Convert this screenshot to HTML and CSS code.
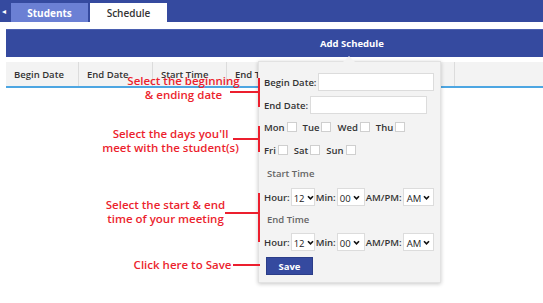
FILE: index.html
```html
<!DOCTYPE html>
<html>
<head>
<meta charset="utf-8">
<link rel="stylesheet" href="styles.css">
</head>
<body>
<div class="page">
  <div class="topbar">
    <span class="back">&#9666;</span>
    <div class="tab tab-students">Students</div>
    <div class="tab tab-schedule">Schedule</div>
  </div>
  <div class="content">
    <div class="addbar">Add Schedule</div>
    <div class="thead">
      <div class="th c1">Begin Date</div>
      <div class="th c2">End Date</div>
      <div class="th c3">Start Time</div>
      <div class="th c4">End Time</div>
      <div class="th c5"></div>
    </div>
  </div>

  <div class="popover">
    <div class="arrow"></div>
    <div class="row r-begin"><label>Begin Date:</label><span class="input w-begin"></span></div>
    <div class="row r-end"><label>End Date:</label><span class="input w-end"></span></div>
    <div class="row days d1">
      <label>Mon</label><span class="cb"></span>
      <label>Tue</label><span class="cb"></span>
      <label>Wed</label><span class="cb"></span>
      <label>Thu</label><span class="cb"></span>
    </div>
    <div class="row days d2">
      <label>Fri</label><span class="cb"></span>
      <label>Sat</label><span class="cb"></span>
      <label>Sun</label><span class="cb"></span>
    </div>
    <div class="sub sub1">Start Time</div>
    <div class="row time t1">
      <label>Hour:</label><span class="sel s-h">12<svg viewBox="0 0 8 6"><path d="M1 1.5 4 4.5 7 1.5"/></svg></span>
      <label>Min:</label><span class="sel s-m">00<svg viewBox="0 0 8 6"><path d="M1 1.5 4 4.5 7 1.5"/></svg></span>
      <label>AM/PM:</label><span class="sel s-a">AM<svg viewBox="0 0 8 6"><path d="M1 1.5 4 4.5 7 1.5"/></svg></span>
    </div>
    <div class="sub sub2">End Time</div>
    <div class="row time t2">
      <label>Hour:</label><span class="sel s-h">12<svg viewBox="0 0 8 6"><path d="M1 1.5 4 4.5 7 1.5"/></svg></span>
      <label>Min:</label><span class="sel s-m">00<svg viewBox="0 0 8 6"><path d="M1 1.5 4 4.5 7 1.5"/></svg></span>
      <label>AM/PM:</label><span class="sel s-a">AM<svg viewBox="0 0 8 6"><path d="M1 1.5 4 4.5 7 1.5"/></svg></span>
    </div>
    <button class="save">Save</button>
  </div>

  <div class="note n1"><div class="ntext"><span>Select the beginning</span><span>&amp; ending date</span></div><span class="hline"></span><span class="vline"></span></div>
  <div class="note n2"><div class="ntext"><span>Select the days you'll</span><span>meet with the student(s)</span></div><span class="hline"></span><span class="vline"></span></div>
  <div class="note n3"><div class="ntext"><span>Select the start &amp; end</span><span>time of your meeting</span></div><span class="hline"></span><span class="vline"></span></div>
  <div class="note n4"><div class="ntext"><span>Click here to Save</span></div><span class="hline"></span></div>
</div>
</body>
</html>
```

FILE: styles.css
```css
* { box-sizing: border-box; }
html, body { margin: 0; padding: 0; background: #fff; }
body { font-family: "Open Sans", "Liberation Sans", sans-serif; color: #333; }
.page { position: relative; width: 543px; height: 303px; overflow: hidden; }

.topbar { height: 22px; background: #354a9f; display: flex; align-items: flex-end; }
.back { width: 10px; height: 22px; color: #fff; font-size: 8px; line-height: 22px; padding-left: 2px; }
.tab { height: 19px; width: 77px; font-size: 10px; font-weight: 700; display: flex; align-items: center; justify-content: center; }
.tab-students { background: #6b80d4; color: #fff; margin-left: 1px; }
.tab-schedule { background: #fff; color: #333; margin-left: 2px; font-weight: 600; }

.content { padding: 7px 0 0 6px; }
.addbar { height: 28px; background: #354a9f; border-top: 1px solid #4a5fb0; color: #fff; font-size: 9.5px; font-weight: 700; display: flex; align-items: center; padding-left: 314px; }
.thead { margin-top: 5px; height: 26px; background: #f3f3f3; border-bottom: 2px solid #4da6e2; display: flex; }
.th { height: 24px; border-right: 1px solid #dcdcdc; font-size: 9.5px; font-weight: 600; color: #333; display: flex; align-items: center; padding-left: 8px; }
.c1 { width: 73px; }
.c2 { width: 74px; }
.c3 { width: 74px; }
.c4 { width: 228px; }
.c5 { border-right: 0; flex: 1; }

.popover { position: absolute; left: 258px; top: 61px; width: 183px; height: 222px; background: #f3f3f3; border: 1px solid #e2e2e2; box-shadow: 0 1px 4px rgba(0,0,0,0.22); padding: 11px 0 0 5px; font-size: 9.5px; font-weight: 600; color: #333; }
.arrow { position: absolute; left: 84px; top: -6px; width: 0; height: 0; border-left: 6px solid transparent; border-right: 6px solid transparent; border-bottom: 6px solid #f3f3f3; }
.row { display: flex; align-items: center; }
.r-begin { height: 18px; }
.r-end { height: 18px; margin-top: 5px; }
.input { display: block; height: 18px; background: #fff; border: 1px solid #dcdcdc; margin-left: 2px; }
.w-begin { width: 116px; }
.w-end { width: 117px; }
.days { height: 10px; }
.d1 { margin-top: 8px; }
.d2 { margin-top: 13px; }
.cb { width: 10px; height: 10px; background: #fff; border: 1px solid #cfcfcf; margin: 0 6px 0 2px; }
.sub { color: #666; margin-left: 3px; height: 14px; line-height: 14px; }
.sub1 { margin-top: 12px; }
.sub2 { margin-top: 7px; }
.time { height: 18px; }
.t1 { margin-top: 7px; }
.t2 { margin-top: 6px; }
.sel { display: flex; align-items: center; gap: 2px; height: 18px; background: #fff; border: 1px solid #dcdcdc; padding: 2px 0 0 2px; margin: 0 1px 0 1px; font-weight: 500; font-size: 9.5px; color: #222; }
.sel svg { width: 7px; height: 5px; margin-top: -1px; fill: none; stroke: #111; stroke-width: 2; }
.s-h { width: 24px; }
.s-m { width: 28px; }
.s-a { width: 31px; padding-left: 3px; }
.save { display: block; margin: 6px 0 0 2px; width: 47px; height: 18px; background: #354a9f; border: 1px solid #2b3d88; color: #fff; font-family: inherit; font-size: 9.5px; font-weight: 700; padding: 0; }

.note { position: absolute; right: 283px; display: flex; align-items: flex-start; color: #ec1f2e; font-family: "Open Sans", "Liberation Sans", sans-serif; font-size: 11.5px; font-weight: 600; line-height: 14px; }
.ntext { display: flex; flex-direction: column; align-items: center; white-space: nowrap; }
.hline { height: 2px; background: #ec1f2e; }
.vline { width: 2px; background: #ec1f2e; }
.n1 { top: 78px; height: 29px; }
.n1 .ntext { width: 93px; margin-top: -4px; }
.n1 .hline { width: 28px; margin-top: 13px; }
.n1 .vline { height: 29px; }
.n2 { top: 126px; height: 26px; }
.n2 .ntext { width: 125px; margin-top: 1px; }
.n2 .hline { width: 25px; margin-top: 12px; }
.n2 .vline { height: 26px; }
.n3 { top: 193px; height: 49px; }
.n3 .ntext { width: 119px; margin-top: 5px; }
.n3 .hline { width: 33px; margin-top: 19px; }
.n3 .vline { height: 49px; }
.n4 { top: 264px; height: 2px; }
.n4 .ntext { width: 101px; margin-top: -6px; }
.n4 .hline { width: 27px; }
```
